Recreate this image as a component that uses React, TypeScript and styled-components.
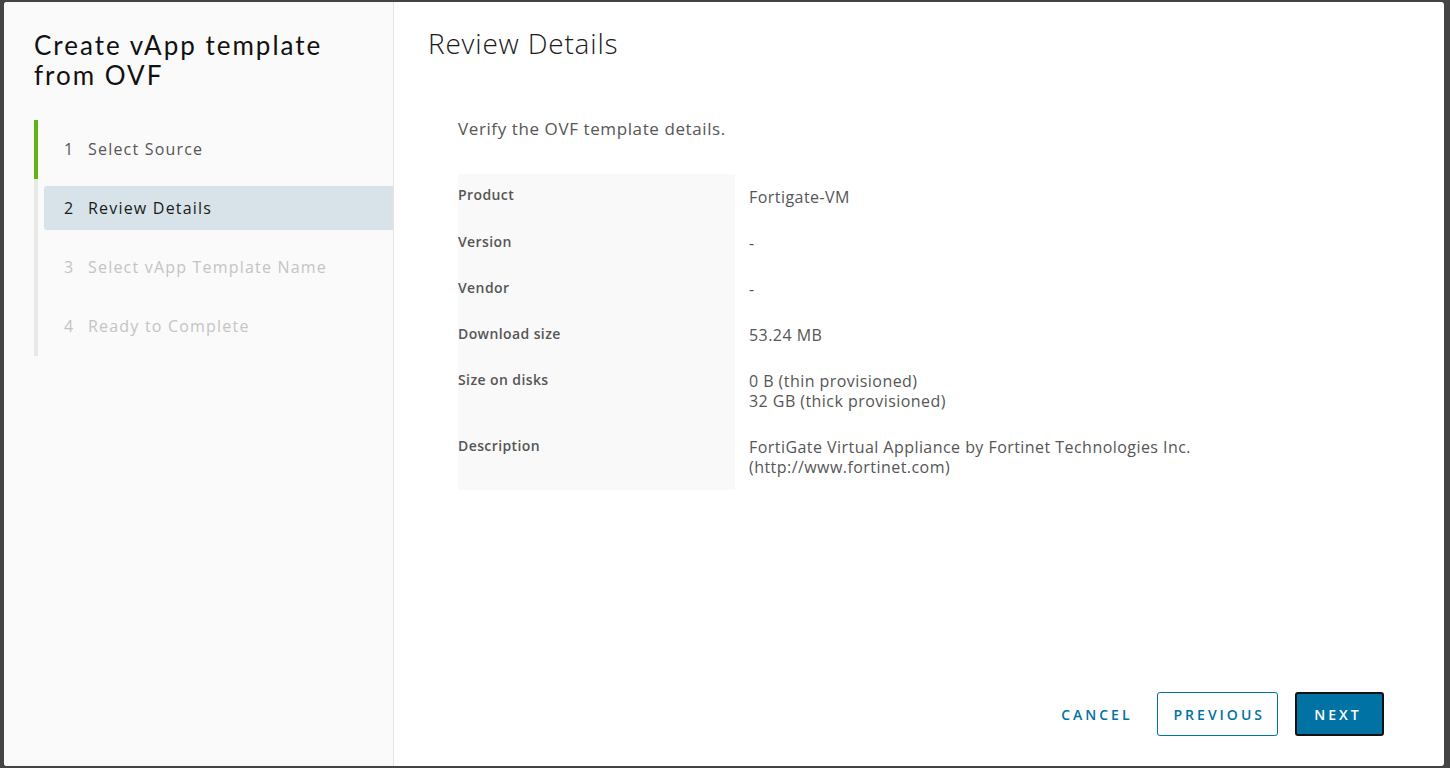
import React from "react";
import styled, { createGlobalStyle } from "styled-components";

const GlobalStyle = createGlobalStyle`
  html, body {
    margin: 0;
    padding: 0;
    background: #444444;
    font-family: "Open Sans", Lato, "Liberation Sans", sans-serif;
    -webkit-font-smoothing: antialiased;
  }
  * {
    box-sizing: border-box;
  }
`;

const Backdrop = styled.div`
  width: 1450px;
  height: 768px;
  padding: 2px 6px 2px 4px;
  background: #444444;
`;

const Modal = styled.div`
  display: flex;
  height: 764px;
  background: #ffffff;
  border-radius: 3px;
  overflow: hidden;
`;

const Nav = styled.nav`
  width: 390px;
  flex-shrink: 0;
  background: #fafafa;
  border-right: 1px solid #e4e4e4;
  padding: 28px 0 0 30px;
`;

const Title = styled.h1`
  margin: 0 0 30px;
  font-family: Lato, "Open Sans", sans-serif;
  font-size: 26px;
  line-height: 30px;
  font-weight: 400;
  letter-spacing: 2px;
  color: #111111;
`;

const StepList = styled.ol`
  list-style: none;
  margin: 0;
  padding: 0;
`;

const Step = styled.li<{ $done?: boolean }>`
  height: 59px;
  border-left: 4px solid ${(p) => (p.$done ? "#60b515" : "#e8e8e8")};
  padding: 7px 0 8px 6px;
`;

const StepLink = styled.div<{ $state: "done" | "current" | "todo" }>`
  display: flex;
  align-items: center;
  height: 44px;
  padding-left: 20px;
  border-radius: 3px 0 0 3px;
  font-size: 16px;
  letter-spacing: 1.2px;
  background: ${(p) => (p.$state === "current" ? "#d8e3e9" : "transparent")};
  color: ${(p) =>
    p.$state === "current" ? "#1a1a1a" : p.$state === "done" ? "#565656" : "#c4c4c4"};
`;

const StepNum = styled.span`
  width: 24px;
`;

const Content = styled.main`
  flex: 1;
  display: flex;
  flex-direction: column;
  padding: 22px 60px 30px 34px;
`;

const Heading = styled.h2`
  margin: 0;
  font-size: 28px;
  line-height: 38px;
  font-weight: 300;
  letter-spacing: 0.8px;
  color: #1a1a1a;
`;

const Body = styled.div`
  flex: 1;
  padding: 55px 0 0 30px;
`;

const Lead = styled.p`
  margin: 0 0 33px;
  font-size: 17px;
  line-height: 24px;
  letter-spacing: 0.6px;
  color: #565656;
`;

const Details = styled.div`
  display: grid;
  grid-template-columns: 277px 1fr;
`;

const Label = styled.div`
  background: #f9f9f9;
  padding: 13px 0 14px;
  font-size: 14px;
  line-height: 18px;
  font-weight: 600;
  letter-spacing: 0.4px;
  color: #565656;
  &:first-child {
    padding-top: 12px;
  }
`;

const Value = styled.div`
  padding: 13px 0 13px 14px;
  font-size: 16px;
  line-height: 20px;
  letter-spacing: 0.45px;
  color: #565656;
`;

const Footer = styled.div`
  display: flex;
  justify-content: flex-end;
  align-items: center;
  gap: 17px;
`;

const buttonPadding = {
  flat: "0 6px 0 10px",
  outline: "0 12px 0 16px",
  solid: "0 14px 0 11px",
};

const Button = styled.button<{ $variant: "flat" | "outline" | "solid" }>`
  height: 44px;
  padding: ${(p) => buttonPadding[p.$variant]};
  border-radius: 3px;
  font-family: inherit;
  font-size: 14px;
  font-weight: 600;
  letter-spacing: 3px;
  text-transform: uppercase;
  cursor: pointer;
  border: ${(p) =>
    p.$variant === "outline"
      ? "1px solid #0072a3"
      : p.$variant === "solid"
      ? "2px solid #111111"
      : "1px solid transparent"};
  background: ${(p) => (p.$variant === "solid" ? "#0072a3" : "transparent")};
  color: ${(p) => (p.$variant === "solid" ? "#ffffff" : "#0072a3")};
  min-width: ${(p) => (p.$variant === "solid" ? "89px" : "auto")};
`;

const steps = [
  { n: 1, label: "Select Source", state: "done" as const },
  { n: 2, label: "Review Details", state: "current" as const },
  { n: 3, label: "Select vApp Template Name", state: "todo" as const },
  { n: 4, label: "Ready to Complete", state: "todo" as const },
];

const rows: [string, string[]][] = [
  ["Product", ["Fortigate-VM"]],
  ["Version", ["-"]],
  ["Vendor", ["-"]],
  ["Download size", ["53.24 MB"]],
  ["Size on disks", ["0 B (thin provisioned)", "32 GB (thick provisioned)"]],
  ["Description", ["FortiGate Virtual Appliance by Fortinet Technologies Inc.", "(http://www.fortinet.com)"]],
];

export default function App() {
  return (
    <>
      <GlobalStyle />
      <Backdrop>
        <Modal>
          <Nav>
            <Title>
              Create vApp template
              <br />
              from OVF
            </Title>
            <StepList>
              {steps.map((s) => (
                <Step key={s.n} $done={s.state === "done"}>
                  <StepLink $state={s.state}>
                    <StepNum>{s.n}</StepNum>
                    {s.label}
                  </StepLink>
                </Step>
              ))}
            </StepList>
          </Nav>
          <Content>
            <Heading>Review Details</Heading>
            <Body>
              <Lead>Verify the OVF template details.</Lead>
              <Details>
                {rows.map(([label, values]) => (
                  <React.Fragment key={label}>
                    <Label>{label}</Label>
                    <Value>
                      {values.map((v) => (
                        <div key={v}>{v}</div>
                      ))}
                    </Value>
                  </React.Fragment>
                ))}
              </Details>
            </Body>
            <Footer>
              <Button $variant="flat">Cancel</Button>
              <Button $variant="outline">Previous</Button>
              <Button $variant="solid">Next</Button>
            </Footer>
          </Content>
        </Modal>
      </Backdrop>
    </>
  );
}
